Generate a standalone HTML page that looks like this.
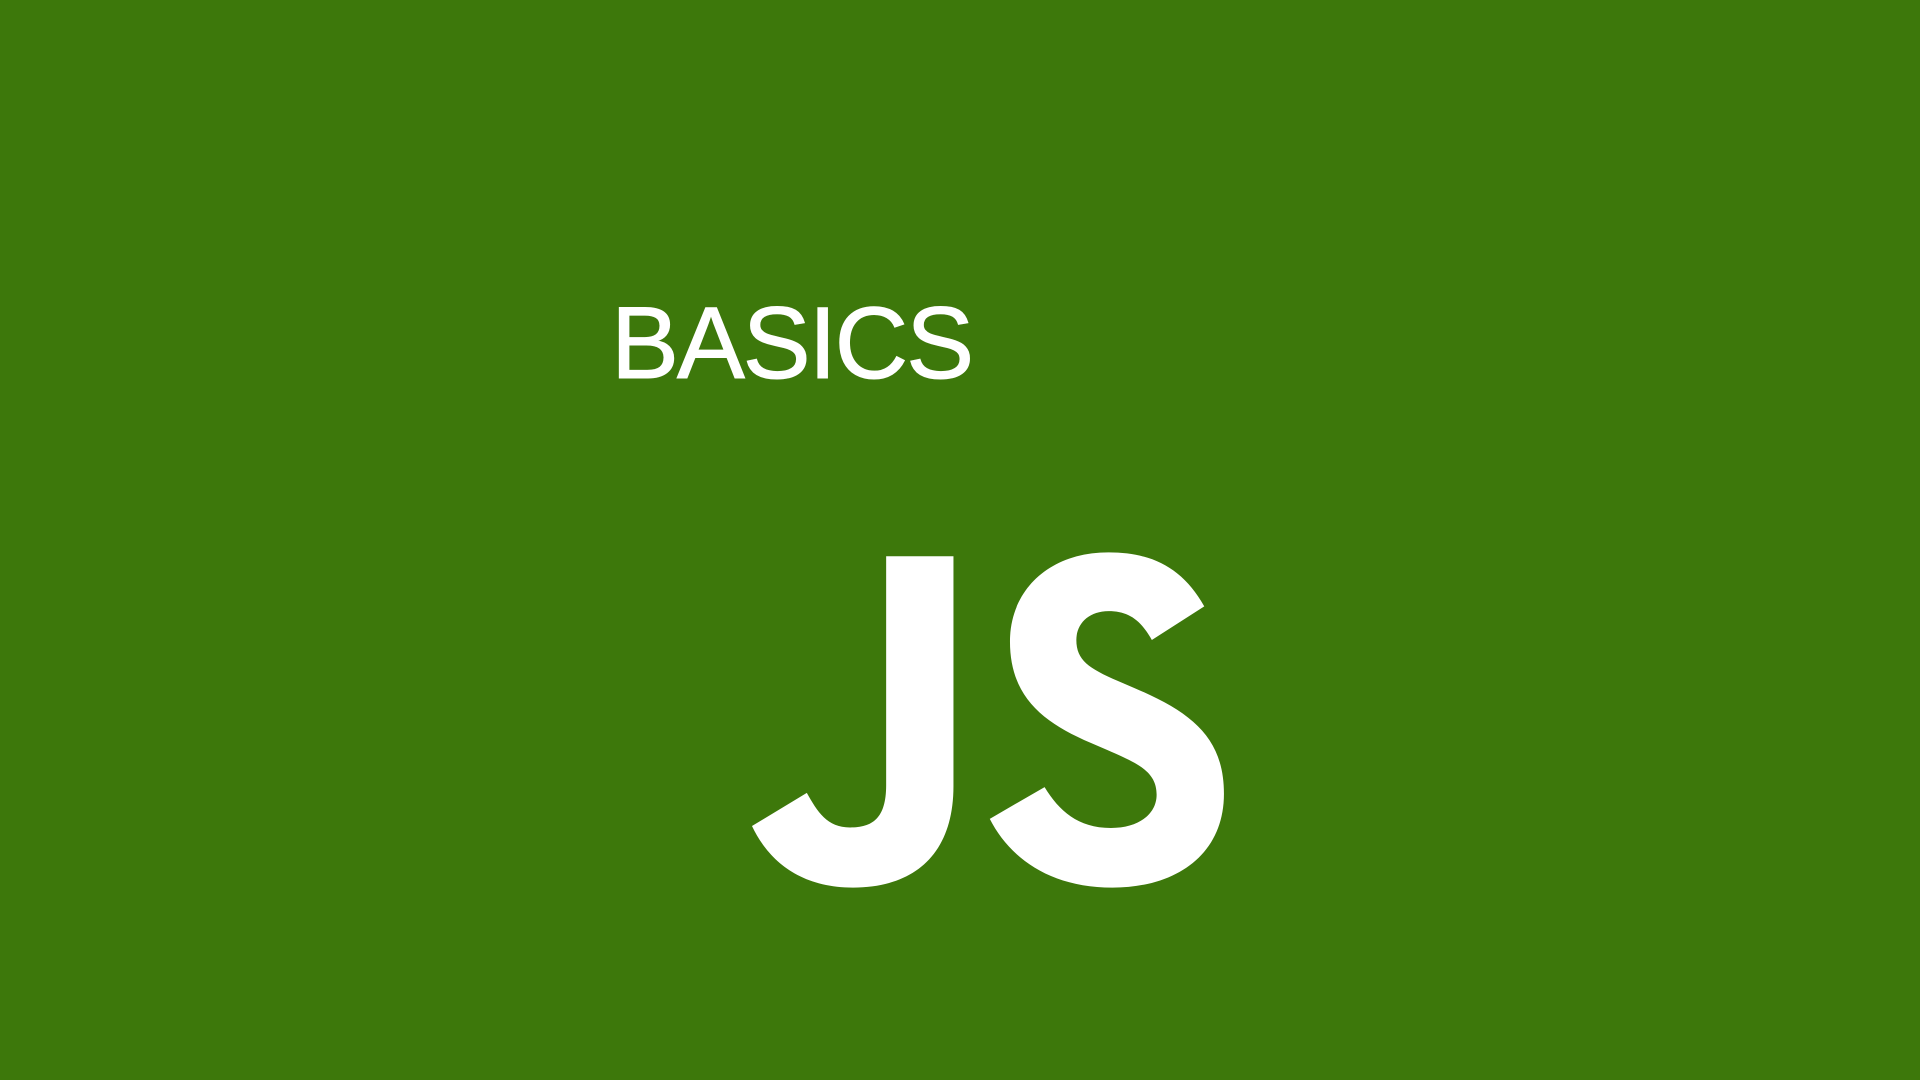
<!DOCTYPE html>
<html><head><meta charset="utf-8"><style>
html,body{margin:0;padding:0;width:1920px;height:1080px;overflow:hidden;background:#3d780b;}
.t{position:absolute;left:611px;top:292px;font-family:"Liberation Sans",sans-serif;font-size:102px;color:#fff;line-height:1;letter-spacing:-2.2px;-webkit-text-stroke:1px #fff;}
svg{position:absolute;left:0;top:0;}
</style></head><body>
<div class="t">BASICS</div>
<svg width="1920" height="1080" viewBox="0 0 1920 1080">
<g transform="translate(752,551) scale(1.131,1.131) translate(-165.65,-283.3)" fill="#fff">
<path d="m165.65 526.47 48.467-29.331c9.3502 16.577 17.857 30.602 38.26 30.602 19.556 0 31.887-7.6498 31.887-37.407v-202.37h59.513v203.21c0 61.645-36.135 89.707-88.859 89.707-47.617 0-75.252-24.654-89.282-54.417"/>
<path d="m375.89 520.1 48.461-28.057c12.758 20.832 29.336 36.135 58.672 36.135 24.659 0 40.38-12.329 40.38-29.336 0-20.403-16.154-27.628-43.363-39.530l-14.875-6.3822c-42.937-18.281-71.423-41.228-71.423-89.71 0-44.657 34.016-78.673 87.18-78.673 37.852 0 65.063 13.181 84.61 47.678l-46.360 29.765c-10.206-18.281-21.228-25.481-38.25-25.481-17.436 0-28.486 11.054-28.486 25.481 0 17.862 11.05 25.087 36.558 36.142l14.875 6.3717c50.576 21.683 79.062 43.792 79.062 93.5 0 53.587-42.096 82.943-98.634 82.943-55.281 0-90.993-26.343-108.47-60.865"/>
</g>
</svg>
</body></html>
